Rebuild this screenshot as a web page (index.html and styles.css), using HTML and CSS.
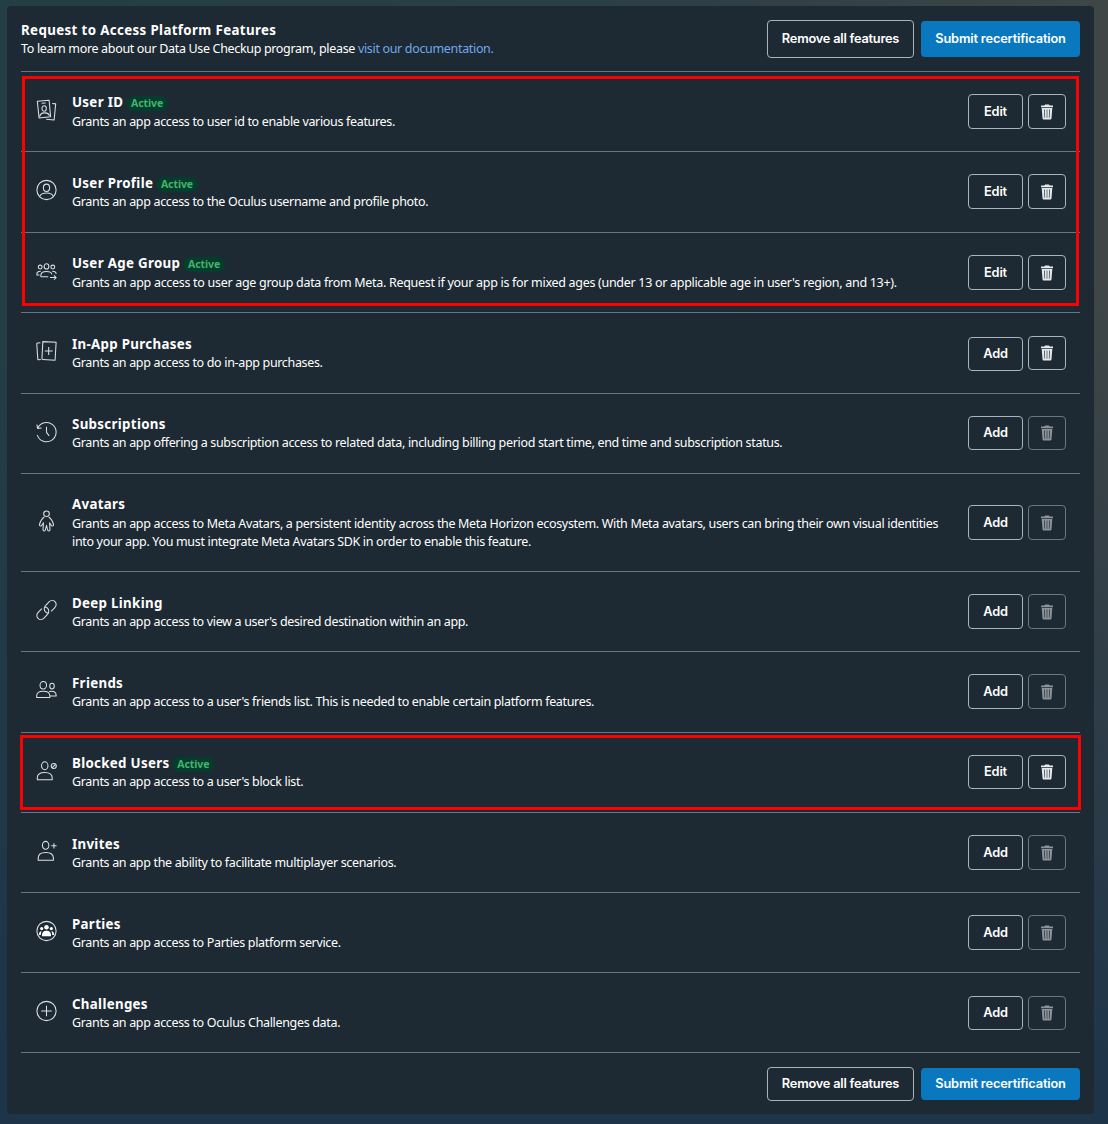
FILE: index.html
```html
<!DOCTYPE html>
<html lang="en">
<head>
<meta charset="utf-8">
<title>Platform Features</title>
<link rel="stylesheet" href="styles.css">
</head>
<body>
<svg class="defs" width="0" height="0">
  <symbol id="trash" viewBox="0 0 12 16"><path d="M3.2 1.6 4.2.4h3.6l1 1.2H12v1.6H0V1.6z"/><path fill-rule="evenodd" d="M.7 4h10.6l-.8 10.2c-.1.8-.6 1.3-1.4 1.3H2.9c-.8 0-1.300-.5-1.400-1.300zM3.200 5.400l.3 8.300h.6L3.900 5.400zm2.500 0v8.300h.6V5.400zm2.400 0-.2 8.300h.6L8.800 5.400z"/></symbol>
</svg>
<main class="panel">
  <header class="head">
    <div class="intro">
      <h1 class="heading">Request to Access Platform Features</h1>
      <p class="lead">To learn more about our Data Use Checkup program, please <a class="link" href="#">visit our documentation.</a></p>
    </div>
    <div class="bulk"><button class="btn wide">Remove all features</button><button class="btn primary">Submit recertification</button></div>
  </header>

  <section class="features">
    <article class="row loose">
      <svg class="icon" viewBox="0 0 24 24"><path d="m1.500 2 13.500-1.200 1.700 19-13.200 1.400zM18.500 4.500l4 .5-1.800 18.500-9-1M6.500 4.300l4.500-.3M4.500 19.500c0-2.600 1.600-4 5-4.200s5.200.8 5.900 3.400"/><ellipse cx="9.300" cy="10.300" rx="2.500" ry="3.200"/></svg>
      <div class="copy"><h2 class="title">User ID <span class="badge">Active</span></h2><p class="desc">Grants an app access to user id to enable various features.</p></div>
      <div class="acts"><button class="btn">Edit</button><button class="btn bin"><svg><use href="#trash"/></svg></button></div>
    </article>
    <article class="row">
      <svg class="icon" viewBox="0 0 24 24"><circle cx="12" cy="12" r="11"/><ellipse cx="12" cy="9.500" rx="3.600" ry="4.200"/><path d="M4.200 19.500c1-3 3.800-4 7.800-4s6.800 1 7.800 4"/></svg>
      <div class="copy"><h2 class="title">User Profile <span class="badge">Active</span></h2><p class="desc">Grants an app access to the Oculus username and profile photo.</p></div>
      <div class="acts"><button class="btn">Edit</button><button class="btn bin"><svg><use href="#trash"/></svg></button></div>
    </article>
    <article class="row loose">
      <svg class="icon" viewBox="0 0 24 24"><circle cx="4.800" cy="7.500" r="2.200"/><ellipse cx="12" cy="6.800" rx="2.700" ry="3"/><circle cx="19.200" cy="7.500" r="2.200"/><path d="M5.500 18.500v-1.500c0-3 2.500-4.500 6.500-4.500 3.500 0 5.600 1.200 6.200 3.200M5.500 18.500H14M4 16.500H1v-1c0-2 1.300-3.300 4.500-3.200M18.500 12.300c3 0 4.500 1.200 4.500 3.200M16 19.500h7M20.500 17l2.500 2.500-2.500 2.500"/></svg>
      <div class="copy"><h2 class="title">User Age Group <span class="badge">Active</span></h2><p class="desc age">Grants an app access to user age group data from Meta. Request if your app is for mixed ages (under 13 or applicable age in user's region, and 13+).</p></div>
      <div class="acts"><button class="btn">Edit</button><button class="btn bin"><svg><use href="#trash"/></svg></button></div>
    </article>
    <article class="row">
      <svg class="icon" viewBox="0 0 24 24"><path d="M7.800 1.300 23 2l-1.200 20.500-14-.8a1 1 0 0 1-1-1zM5 2.500l-3.300.4a1 1 0 0 0-.8 1.200L2 21a1 1 0 0 0 1 1l2.500-.2M14.500 7.500v9M10 12h9"/></svg>
      <div class="copy"><h2 class="title">In-App Purchases</h2><p class="desc">Grants an app access to do in-app purchases.</p></div>
      <div class="acts low short"><button class="btn low">Add</button><button class="btn bin"><svg><use href="#trash"/></svg></button></div>
    </article>
    <article class="row high">
      <svg class="icon" viewBox="0 0 24 24"><path d="M1.800 8A11 11 0 1 1 1.500 15.500M1 3.500 1.800 8l4.500-.5M12 6v6.500l3 4"/></svg>
      <div class="copy"><h2 class="title">Subscriptions</h2><p class="desc">Grants an app offering a subscription access to related data, including billing period start time, end time and subscription status.</p></div>
      <div class="acts short"><button class="btn">Add</button><button class="btn bin off"><svg><use href="#trash"/></svg></button></div>
    </article>
    <article class="row loose tall">
      <svg class="icon" viewBox="0 0 24 24"><circle cx="12" cy="3.700" r="3.200"/><path d="M9.500 7.500C7 9 5 12.500 4 16c-.5 1.700 1.800 2.500 2.700.8L8.500 14 8 22c0 1.800 2.500 1.800 2.800 0l1.200-5 1.200 5c.3 1.800 2.800 1.800 2.800 0l-.5-8 1.800 2.800c.9 1.700 3.200.9 2.700-.8-1-3.500-3-7-5.500-8.500"/></svg>
      <div class="copy"><h2 class="title">Avatars</h2><p class="desc">Grants an app access to Meta Avatars, a persistent identity across the Meta Horizon ecosystem. With Meta avatars, users can bring their own visual identities<br>into your app. You must integrate Meta Avatars SDK in order to enable this feature.</p></div>
      <div class="acts"><button class="btn">Add</button><button class="btn bin off"><svg><use href="#trash"/></svg></button></div>
    </article>
    <article class="row">
      <svg class="icon" viewBox="0 0 24 24"><path d="M14.500 15.300c-1.300.2-2.600-.2-3.600-1.200-2-2-2-5.200 0-7.200l4-4.200c2-2 5-2 6.800-.2s1.800 4.800-.2 6.800L17.300 13.500M9.500 8.700c1.300-.2 2.600.2 3.600 1.200 2 2 2 5.200 0 7.200l-4 4.200c-2 2-5 2-6.800.2s-1.800-4.800.2-6.800L6.700 10.500"/></svg>
      <div class="copy"><h2 class="title">Deep Linking</h2><p class="desc">Grants an app access to view a user's desired destination within an app.</p></div>
      <div class="acts"><button class="btn">Add</button><button class="btn bin off"><svg><use href="#trash"/></svg></button></div>
    </article>
    <article class="row">
      <svg class="icon" viewBox="0 0 24 24"><ellipse cx="8.300" cy="6.500" rx="3.700" ry="4.300"/><ellipse cx="18.300" cy="7.500" rx="2.600" ry="3.300"/><path d="M.8 20.500v-1.800c0-3.400 2.500-5.300 7.500-5.300s7.500 1.900 7.500 5.300v1.800zM15 13.800c4.700-1.300 8 .4 8 3.800v1.200h-7"/></svg>
      <div class="copy"><h2 class="title">Friends</h2><p class="desc">Grants an app access to a user's friends list. This is needed to enable certain platform features.</p></div>
      <div class="acts"><button class="btn">Add</button><button class="btn bin off"><svg><use href="#trash"/></svg></button></div>
    </article>
    <article class="row high">
      <svg class="icon" viewBox="0 0 24 24"><ellipse cx="10" cy="6" rx="3.700" ry="4.500"/><path d="M1.500 22v-2.300c0-3.700 3-6 8.500-6s8.500 2.300 8.500 6V22z"/><circle cx="20.300" cy="6.300" r="2.900"/><path d="m18.300 8.300 4-4"/></svg>
      <div class="copy"><h2 class="title">Blocked Users <span class="badge">Active</span></h2><p class="desc">Grants an app access to a user's block list.</p></div>
      <div class="acts short"><button class="btn">Edit</button><button class="btn bin"><svg><use href="#trash"/></svg></button></div>
    </article>
    <article class="row">
      <svg class="icon" viewBox="0 0 24 24"><ellipse cx="11" cy="5.500" rx="3.700" ry="4.500"/><path d="M2.500 22.500v-2.300c0-4 3-6.500 8.700-6.500s8.700 2.500 8.700 6.500v2.300zM20.500 3v6M17.500 6h6"/></svg>
      <div class="copy"><h2 class="title">Invites</h2><p class="desc">Grants an app the ability to facilitate multiplayer scenarios.</p></div>
      <div class="acts"><button class="btn">Add</button><button class="btn bin off"><svg><use href="#trash"/></svg></button></div>
    </article>
    <article class="row">
      <svg class="icon" viewBox="0 0 24 24"><circle cx="12" cy="12" r="11"/><g class="solid"><circle cx="12" cy="7.700" r="2.600"/><circle cx="6.500" cy="9.200" r="1.800"/><circle cx="17.500" cy="9.200" r="1.800"/><path d="M6.800 18c0-4.500 1.700-6.200 5.200-6.200s5.200 1.700 5.200 6.200zM6.300 12.200c-2.300.2-3 1.800-3 4.300h2.200c0-1.700.2-3 .8-4.300zM17.700 12.200c2.300.2 3 1.800 3 4.300h-2.200c0-1.700-.2-3-.8-4.300z"/></g></svg>
      <div class="copy"><h2 class="title">Parties</h2><p class="desc">Grants an app access to Parties platform service.</p></div>
      <div class="acts"><button class="btn">Add</button><button class="btn bin off"><svg><use href="#trash"/></svg></button></div>
    </article>
    <article class="row">
      <svg class="icon" viewBox="0 0 24 24"><circle cx="12" cy="12" r="11"/><path d="M12 6v12M6 12h12"/></svg>
      <div class="copy"><h2 class="title">Challenges</h2><p class="desc">Grants an app access to Oculus Challenges data.</p></div>
      <div class="acts low short"><button class="btn">Add</button><button class="btn bin off"><svg><use href="#trash"/></svg></button></div>
    </article>
    <div class="mark mark-user"></div>
    <div class="mark mark-blocked"></div>
  </section>

  <footer class="foot">
    <div class="bulk"><button class="btn wide">Remove all features</button><button class="btn primary">Submit recertification</button></div>
  </footer>
</main>
</body>
</html>
```

FILE: styles.css
```css
* { box-sizing: border-box; }
body {
  margin: 0;
  height: 1124px;
  padding: 6px 14px 10px 7px;
  background: linear-gradient(to bottom, transparent 25%, #1d3449), linear-gradient(to right, #243e45, #2c3f46 60%, #404646);
  color: #fff;
  font-family: "Noto Sans", "Open Sans", sans-serif;
}
h1, h2, p { margin: 0; }
.defs { position: absolute; }
.panel {
  height: 1108px;
  padding: 0 14px;
  border-radius: 4px;
  background: #1e2a33;
}
.head {
  height: 66px;
  display: flex;
  justify-content: space-between;
  border-bottom: 1px solid #647689;
}
.intro { padding-top: 15px; }
.heading, .title {
  font-size: 13.3px;
  line-height: 18px;
  font-weight: 700;
  letter-spacing: 0.32px;
  white-space: nowrap;
}
.heading { letter-spacing: 0.37px; }
.lead, .desc {
  position: relative;
  top: 1px;
  font-size: 12.5px;
  line-height: 18px;
  letter-spacing: -0.333px;
  white-space: nowrap;
}
.age { letter-spacing: -0.3px; }
.link { color: #6fa8ec; text-decoration: none; }
.bulk { display: flex; align-items: center; gap: 7px; }
.head .bulk { height: 38px; margin-top: 14px; }
.btn {
  width: 55px;
  height: 35px;
  padding: 0;
  border: 1px solid #a9b4bb;
  border-radius: 4px;
  background: transparent;
  color: #fff;
  font: 600 12.8px/18px Inter, sans-serif;
  letter-spacing: -0.17px;
  white-space: nowrap;
}
.btn.wide { width: 147px; height: 38px; padding-bottom: 1px; letter-spacing: -0.23px; }
.btn.primary { width: 159px; height: 36px; padding-bottom: 1px; border: 0; background: #0a78be; }
.short .btn { height: 34px; padding-bottom: 1px; }
.btn.bin { width: 38px; padding: 0; display: flex; align-items: center; justify-content: center; }
.bin svg { width: 12px; height: 16px; fill: #e6e9eb; }
.btn.off { opacity: 0.55; }
.features {
  position: relative;
  display: grid;
  grid-template-rows: 80px 81px 80px 81px 80px 98px 80px 81px repeat(4, 80px);
}
.row {
  display: flex;
  padding: 22px 14px 0 15px;
  border-bottom: 1px solid #647689;
}
.icon {
  width: 21px;
  height: 22px;
  margin: 5px 15px 0 0;
  flex: none;
  fill: none;
  stroke: #dce0e3;
  stroke-width: 1.2;
  stroke-linejoin: round;
}
.solid { fill: #fff; stroke: none; }
.copy { flex: 1; min-width: 0; }
.loose .title { margin: -1px 0 1px; }
.high .copy { margin-top: -1px; }
.badge {
  display: inline-block;
  height: 15px;
  margin-left: -1px;
  padding: 0 5px;
  border-radius: 8px;
  background: #043c2d;
  color: #45b36b;
  font-size: 10.5px;
  font-weight: 700;
  line-height: 15px;
  letter-spacing: -0.1px;
}
.acts { display: flex; gap: 5px; height: 35px; }
.low { margin-top: 1px; }
.tall .icon { margin-top: 14px; }
.tall .acts { margin-top: 9px; }
.mark { position: absolute; border: 3px solid #f00; }
.mark-user { left: 1px; top: 4px; width: 1057px; height: 230px; }
.mark-blocked { left: -1px; top: 663px; width: 1061px; height: 75px; }
.foot { display: flex; justify-content: flex-end; padding-top: 14px; }
.foot .btn { height: 34px; }
.foot .btn.primary { height: 32px; }
```
